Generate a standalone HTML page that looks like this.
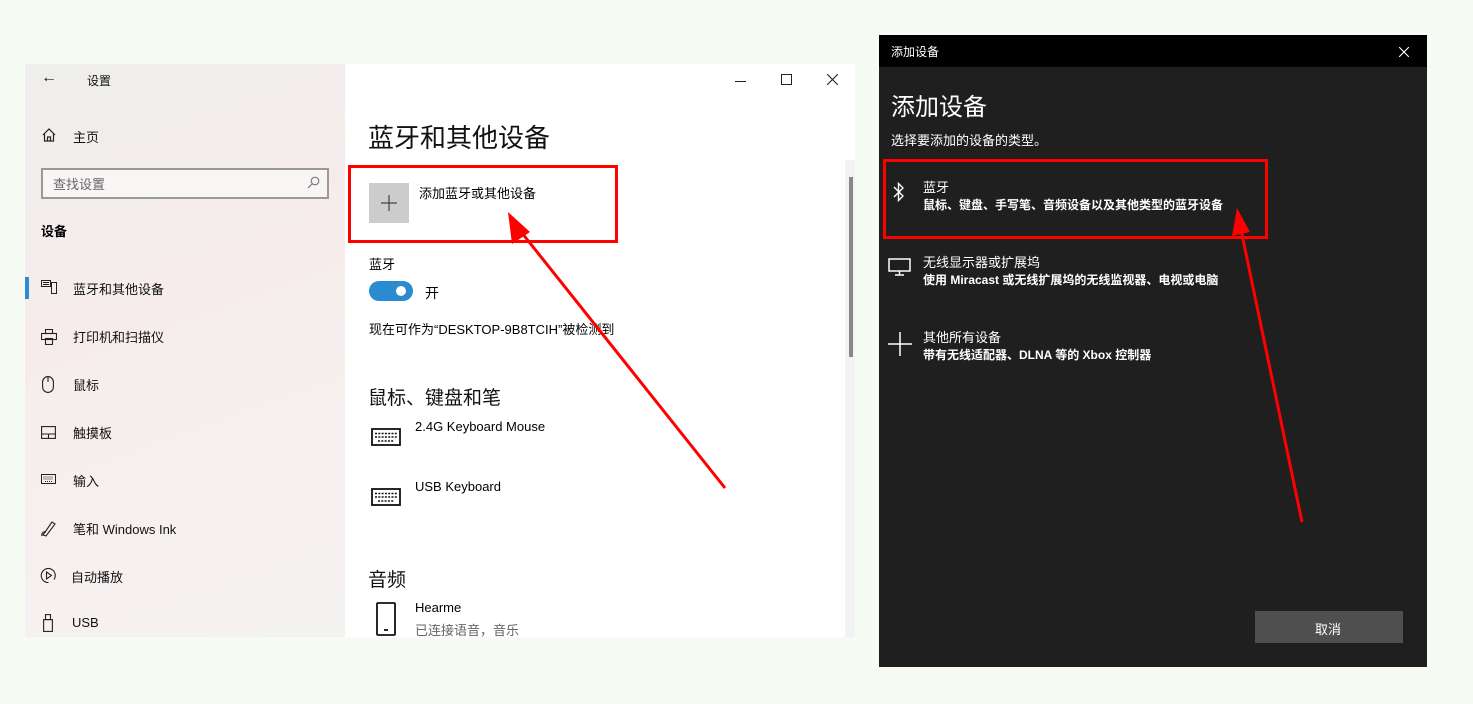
<!DOCTYPE html>
<html><head><meta charset="utf-8"><style>
*{margin:0;padding:0;box-sizing:border-box}
body{width:1473px;height:704px;background:#f6fbf4;position:relative;overflow:hidden;font-family:"Liberation Sans","Noto Sans CJK SC",sans-serif;color:#000}
.a{position:absolute;white-space:nowrap}
#side{position:absolute;left:25px;top:64px;width:320px;height:573px;background:linear-gradient(160deg,#eeeeec 0%,#f6ecec 40%,#f7efef 70%,#f4f2f1 100%)}
#main{position:absolute;left:345px;top:64px;width:510px;height:573px;background:#fff}
.nav{font-size:13px;color:#111}
#dlg{position:absolute;left:879px;top:35px;width:548px;height:632px;background:#1f1f1f;color:#fff}
#dlg .t{position:absolute;left:0;top:0;width:548px;height:32px;background:#000}
.w{color:#fff}
</style></head><body>
<div id="side">
 <div class="a" style="left:16px;top:5px;font-size:16px;color:#222">←</div>
 <div class="a nav" style="left:62px;top:8px;font-size:12px">设置</div>
 <svg class="a" style="left:17px;top:64px" width="14" height="14" viewBox="0 0 14 14" fill="none" stroke="#222" stroke-width="1.2"><path d="M1 7 L7 1 L13 7 M2.5 6 V13 H11.5 V6 M5.5 13 V9 H8.5 V13"/></svg>
 <div class="a nav" style="left:48px;top:63px">主页</div>
 <div class="a" style="left:16px;top:104px;width:288px;height:31px;border:2px solid #999;background:#f9f5f5"></div>
 <div class="a" style="left:28px;top:110px;font-size:13px;color:#666">查找设置</div>
 <svg class="a" style="left:282px;top:112px" width="13" height="13" viewBox="0 0 13 13" fill="none" stroke="#777" stroke-width="1.1"><circle cx="8" cy="5" r="3.8"/><path d="M5.2 7.8 L1 12"/></svg>
 <div class="a" style="left:16px;top:157px;font-size:13px;font-weight:bold">设备</div>
 <div class="a" style="left:0;top:213px;width:4px;height:22px;background:#2b8ad0"></div>
 <svg class="a" style="left:16px;top:216px" width="16" height="14" viewBox="0 0 16 14" fill="none" stroke="#222" stroke-width="1"><rect x="0.5" y="0.5" width="9" height="6"/><rect x="10.5" y="2.5" width="5" height="11"/><path d="M2 2.5h6M2 4.5h6"/></svg>
 <div class="a nav" style="left:48px;top:215px">蓝牙和其他设备</div>
 <svg class="a" style="left:16px;top:265px" width="16" height="16" viewBox="0 0 16 16" fill="none" stroke="#222" stroke-width="1.1"><rect x="4.5" y="0.5" width="7" height="4"/><rect x="0.5" y="4.5" width="15" height="6"/><rect x="4.5" y="9.5" width="7" height="6"/></svg>
 <div class="a nav" style="left:48px;top:263px">打印机和扫描仪</div>
 <svg class="a" style="left:17px;top:312px" width="12" height="17" viewBox="0 0 12 17" fill="none" stroke="#222" stroke-width="1.1"><rect x="0.6" y="0.6" width="10.8" height="15.8" rx="5.4"/><path d="M6 1v5"/></svg>
 <div class="a nav" style="left:48px;top:311px">鼠标</div>
 <svg class="a" style="left:16px;top:362px" width="15" height="13" viewBox="0 0 15 13" fill="none" stroke="#222" stroke-width="1.1"><rect x="0.6" y="0.6" width="13.8" height="11.8"/><path d="M0.6 8h13.8M7.5 8v4.4"/></svg>
 <div class="a nav" style="left:48px;top:359px">触摸板</div>
 <svg class="a" style="left:16px;top:410px" width="15" height="10" viewBox="0 0 15 10" fill="none" stroke="#222" stroke-width="1"><rect x="0.5" y="0.5" width="14" height="9"/><path d="M2.5 3h10M2.5 5h10M4 7.5h7" stroke-dasharray="1 1"/></svg>
 <div class="a nav" style="left:48px;top:407px">输入</div>
 <svg class="a" style="left:15px;top:455px" width="18" height="18" viewBox="0 0 18 18" fill="none" stroke="#222" stroke-width="1.1"><path d="M3 16 L12 3 L15 5 L6 17 Z M2 17 C1 14 4 12 6 13"/></svg>
 <div class="a nav" style="left:48px;top:455px">笔和 Windows Ink</div>
 <svg class="a" style="left:15px;top:503px" width="17" height="17" viewBox="0 0 17 17" fill="none" stroke="#222" stroke-width="1.1"><path d="M8.5 15.5 A7 7 0 1 1 14 12.5"/><path d="M6.5 5 L11.5 8.5 L6.5 12 Z"/></svg>
 <div class="a nav" style="left:46px;top:503px">自动播放</div>
 <svg class="a" style="left:18px;top:550px" width="10" height="18" viewBox="0 0 10 18" fill="none" stroke="#222" stroke-width="1.1"><rect x="2.5" y="0.6" width="5" height="5"/><rect x="0.6" y="5.6" width="8.8" height="11.8"/></svg>
 <div class="a nav" style="left:47px;top:551px">USB</div>
</div>
<div id="main">
 <div class="a" style="left:390px;top:17px;width:11px;height:1px;background:#222"></div>
 <div class="a" style="left:436px;top:10px;width:11px;height:11px;border:1px solid #222"></div>
 <svg class="a" style="left:482px;top:10px" width="11" height="11" viewBox="0 0 11 11" stroke="#222" stroke-width="1.1"><path d="M0 0L11 11M11 0L0 11"/></svg>
 <div class="a" style="left:23px;top:54px;font-size:26px;color:#111">蓝牙和其他设备</div>
 <div class="a" style="left:24px;top:119px;width:40px;height:40px;background:#ccc"></div>
 <svg class="a" style="left:36px;top:131px" width="16" height="16" viewBox="0 0 16 16" stroke="#444" stroke-width="1.2"><path d="M8 0v16M0 8h16"/></svg>
 <div class="a" style="left:74px;top:119px;font-size:13px">添加蓝牙或其他设备</div>
 <div class="a" style="left:24px;top:190px;font-size:13px">蓝牙</div>
 <div class="a" style="left:24px;top:217px;width:44px;height:20px;border-radius:10px;background:#2b8ad0"></div>
 <div class="a" style="left:51px;top:222px;width:10px;height:10px;border-radius:5px;background:#fff"></div>
 <div class="a" style="left:80px;top:219px;font-size:14px">开</div>
 <div class="a" style="left:24px;top:255px;font-size:13px">现在可作为“DESKTOP-9B8TCIH”被检测到</div>
 <div class="a" style="left:23px;top:319px;font-size:19px;color:#111">鼠标、键盘和笔</div>
 <svg class="a" style="left:26px;top:364px" width="30" height="18" viewBox="0 0 30 18" fill="none" stroke="#111" stroke-width="1.8"><rect x="1" y="1" width="28" height="16"/><path d="M4 5.5h22M4 9h22M7 13h16" stroke-dasharray="2 1.3" stroke-width="1.6"/></svg>
 <div class="a" style="left:70px;top:355px;font-size:13px">2.4G Keyboard Mouse</div>
 <svg class="a" style="left:26px;top:424px" width="30" height="18" viewBox="0 0 30 18" fill="none" stroke="#111" stroke-width="1.8"><rect x="1" y="1" width="28" height="16"/><path d="M4 5.5h22M4 9h22M7 13h16" stroke-dasharray="2 1.3" stroke-width="1.6"/></svg>
 <div class="a" style="left:70px;top:415px;font-size:13px">USB Keyboard</div>
 <div class="a" style="left:23px;top:501px;font-size:19px;color:#111">音频</div>
 <svg class="a" style="left:31px;top:538px" width="20" height="34" viewBox="0 0 20 34" fill="none" stroke="#111" stroke-width="1.8"><rect x="1" y="1" width="18" height="32" rx="1"/><path d="M8 28h4"/></svg>
 <div class="a" style="left:70px;top:536px;font-size:13px">Hearme</div>
 <div class="a" style="left:70px;top:556px;font-size:13px;color:#666">已连接语音，音乐</div>
 <div class="a" style="left:500px;top:96px;width:10px;height:477px;background:#f3f3f3"></div>
 <div class="a" style="left:504px;top:113px;width:4px;height:180px;background:#888"></div>
</div>
<div id="dlg">
 <div class="t"></div>
 <div class="a w" style="left:12px;top:8px;font-size:12px">添加设备</div>
 <svg class="a" style="left:520px;top:12px" width="10" height="10" viewBox="0 0 10 10" stroke="#fff" stroke-width="1.1"><path d="M0 0L10 10M10 0L0 10"/></svg>
 <div class="a w" style="left:12px;top:52px;font-size:24px">添加设备</div>
 <div class="a w" style="left:12px;top:95px;font-size:13px">选择要添加的设备的类型。</div>
 <svg class="a" style="left:14px;top:147px" width="12" height="20" viewBox="0 0 12 20" fill="none" stroke="#fff" stroke-width="1.4"><path d="M1 5 L10 14 L5.5 18.5 V1.5 L10 6 L1 15"/></svg>
 <div class="a w" style="left:44px;top:142px;font-size:13px">蓝牙</div>
 <div class="a w" style="left:44px;top:161px;font-size:12px;font-weight:bold">鼠标、键盘、手写笔、音频设备以及其他类型的蓝牙设备</div>
 <svg class="a" style="left:9px;top:223px" width="23" height="18" viewBox="0 0 23 18" fill="none" stroke="#fff" stroke-width="1.5"><rect x="1" y="1" width="21" height="12"/><path d="M11.5 13v4M7 17h9"/></svg>
 <div class="a w" style="left:44px;top:217px;font-size:13px">无线显示器或扩展坞</div>
 <div class="a w" style="left:44px;top:236px;font-size:12px;font-weight:bold">使用 Miracast 或无线扩展坞的无线监视器、电视或电脑</div>
 <svg class="a" style="left:9px;top:297px" width="24" height="24" viewBox="0 0 24 24" stroke="#fff" stroke-width="1.5"><path d="M12 0v24M0 12h24"/></svg>
 <div class="a w" style="left:44px;top:292px;font-size:13px">其他所有设备</div>
 <div class="a w" style="left:44px;top:311px;font-size:12px;font-weight:bold">带有无线适配器、DLNA 等的 Xbox 控制器</div>
 <div class="a" style="left:376px;top:576px;width:148px;height:32px;background:#4f4f4f"></div>
 <div class="a w" style="left:436px;top:584px;font-size:13px">取消</div>
</div>
<div class="a" style="left:348px;top:165px;width:270px;height:78px;border:3px solid #f00"></div>
<div class="a" style="left:883px;top:159px;width:385px;height:80px;border:3px solid #f00"></div>
<svg class="a" style="left:0;top:0" width="1473" height="704" viewBox="0 0 1473 704">
 <path d="M725 488 L518 228" stroke="#f00" stroke-width="3"/>
 <path d="M508 212 L530 232 L512 244 Z" fill="#f00"/>
 <path d="M1302 522 L1240 225" stroke="#f00" stroke-width="3"/>
 <path d="M1237 208 L1250 232 L1232 236 Z" fill="#f00"/>
</svg>
</body></html>
